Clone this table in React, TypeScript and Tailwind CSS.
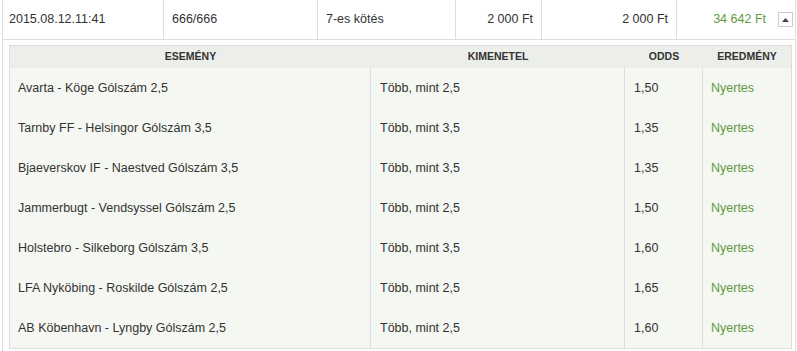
const events = [
  { name: "Avarta - Köge Gólszám 2,5", outcome: "Több, mint 2,5", odds: "1,50" },
  { name: "Tarnby FF - Helsingor Gólszám 3,5", outcome: "Több, mint 3,5", odds: "1,35" },
  { name: "Bjaeverskov IF - Naestved Gólszám 3,5", outcome: "Több, mint 3,5", odds: "1,35" },
  { name: "Jammerbugt - Vendsyssel Gólszám 2,5", outcome: "Több, mint 2,5", odds: "1,50" },
  { name: "Holstebro - Silkeborg Gólszám 3,5", outcome: "Több, mint 3,5", odds: "1,60" },
  { name: "LFA Nyköbing - Roskilde Gólszám 2,5", outcome: "Több, mint 2,5", odds: "1,65" },
  { name: "AB Köbenhavn - Lyngby Gólszám 2,5", outcome: "Több, mint 2,5", odds: "1,60" },
];

export default function App() {
  return (
    <div
      className="w-[797px] h-[351px] overflow-hidden bg-white text-[#333] text-[12.5px]"
      style={{ fontFamily: '"Liberation Sans", Arial, sans-serif' }}
    >
      <div className="ml-[2px] mr-[1px] border-l border-r border-[#dddddd] h-full">
        {/* Ticket summary row */}
        <div className="flex h-[40px] items-center border-b border-[#dddddd]">
          <div className="w-[161px] h-full flex items-center pl-[6px] border-r border-[#dddddd]">
            2015.08.12.11:41
          </div>
          <div className="w-[154px] h-full flex items-center pl-[8px] border-r border-[#dddddd]">
            666/666
          </div>
          <div className="w-[138px] h-full flex items-center pl-[8px] border-r border-[#dddddd]">
            7-es kötés
          </div>
          <div className="w-[86px] h-full flex items-center justify-end pr-[8px] border-r border-[#dddddd]">
            2 000 Ft
          </div>
          <div className="w-[135px] h-full flex items-center justify-end pr-[8px] border-r border-[#dddddd]">
            2 000 Ft
          </div>
          <div className="flex-1 h-full flex items-center justify-end pr-[2px] gap-[12px]">
            <span className="text-[#5f9a3f]">34 642 Ft</span>
            <button className="w-[15px] h-[15px] border border-[#cccccc] bg-white flex items-center justify-center">
              <svg width="7" height="4" viewBox="0 0 7 4">
                <path d="M0 4 L3.5 0 L7 4 Z" fill="#444" />
              </svg>
            </button>
          </div>
        </div>

        {/* Event details */}
        <div className="pt-[5px] pl-[6px] pr-[3px]">
          <div className="border border-[#dddddd] bg-[#f5f7f2]">
            <div className="flex h-[22px] items-center bg-[#eceee9] font-bold text-[10.5px] text-[#333]">
              <div className="w-[361px] text-center">ESEMÉNY</div>
              <div className="w-[254px] text-center">KIMENETEL</div>
              <div className="w-[78px] text-center">ODDS</div>
              <div className="flex-1 text-center">EREDMÉNY</div>
            </div>
            {events.map((e) => (
              <div key={e.name} className="flex h-[40px]">
                <div className="w-[361px] flex items-center pl-[8px] border-r border-[#dddddd]">
                  {e.name}
                </div>
                <div className="w-[254px] flex items-center pl-[9px] border-r border-[#dddddd]">
                  {e.outcome}
                </div>
                <div className="w-[78px] flex items-center pl-[9px] border-r border-[#dddddd]">
                  {e.odds}
                </div>
                <div className="flex-1 flex items-center pl-[8px] text-[#5f9a3f]">
                  Nyertes
                </div>
              </div>
            ))}
          </div>
        </div>
      </div>
    </div>
  );
}
